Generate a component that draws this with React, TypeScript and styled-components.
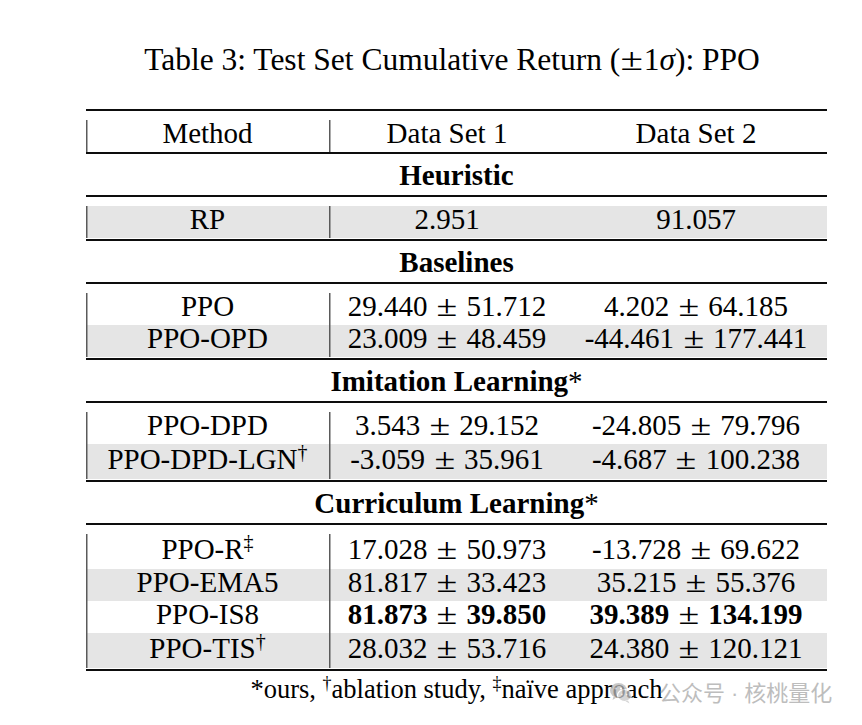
import React from "react";
import styled, { createGlobalStyle } from "styled-components";

const GlobalStyle = createGlobalStyle`
  html, body { margin: 0; padding: 0; background: #ffffff; }
  body {
    font-family: "Liberation Serif", "Times New Roman", serif;
    color: #000;
  }
`;

const Page = styled.div`
  position: relative;
  width: 862px;
  height: 725px;
  overflow: hidden;
  box-sizing: border-box;
  padding: 40px 0 0 86px;
  background: #fff;
`;

const Figure = styled.div`
  width: 741px;
  display: flex;
  flex-direction: column;
`;

const Caption = styled.div`
  height: 40px;
  line-height: 40px;
  font-size: 31.5px;
  text-align: center;
  padding-right: 9px;
  margin-bottom: 29px;
  white-space: nowrap;
`;

const CapPm = styled.span`
  display: inline-block;
  transform: scaleX(1.3);
  margin: 0 3px;
`;

const Rule = styled.div`
  height: 2px;
  background: #0d0d0d;
`;

const Gap = styled.div<{ $h: number }>`
  height: ${(p) => p.$h}px;
`;

const Row = styled.div<{ $shade?: boolean; $tall?: boolean }>`
  display: grid;
  grid-template-columns: 243px 236px 262px;
  height: ${(p) => (p.$tall ? 35 : 32)}px;
  background: ${(p) => (p.$shade ? "#e5e5e5" : "transparent")};
  box-shadow: inset 1.5px 0 0 #5a5a5a;
`;

const Cell = styled.div<{ $divider?: boolean; $tall?: boolean }>`
  font-size: 29px;
  line-height: 26px;
  text-align: center;
  white-space: nowrap;
  padding-top: ${(p) => (p.$tall ? 2 : 0)}px;
  box-shadow: ${(p) => (p.$divider ? "inset 1.5px 0 0 #5a5a5a" : "none")};
`;

const SectionTitle = styled.div`
  height: 41px;
  box-sizing: border-box;
  padding-top: 2px;
  line-height: 39px;
  font-size: 29px;
  font-weight: bold;
  text-align: center;
  white-space: nowrap;
`;

const Star = styled.span`
  font-weight: normal;
`;

const Sup = styled.span`
  font-size: 20px;
  line-height: 0;
  vertical-align: 10px;
`;

const Pm = styled.span`
  display: inline-block;
  transform: scaleX(1.3);
  margin: 0 11.5px;
  font-weight: normal;
`;

const Strong = styled.span`
  font-weight: bold;
`;

const Ital = styled.span`
  font-style: italic;
`;

const Footnote = styled.div`
  padding-top: 4px;
  font-size: 26.5px;
  line-height: 28px;
  text-align: center;
  white-space: nowrap;
`;

const FootSup = styled.span`
  font-size: 18px;
  line-height: 0;
  vertical-align: 9px;
`;

const Watermark = styled.div`
  position: absolute;
  left: 609px;
  top: 677px;
  display: flex;
  align-items: center;
  gap: 26px;
  opacity: 0.75;
  pointer-events: none;
`;

const WatermarkText = styled.span`
  font-family: "Noto Sans CJK SC", "Noto Sans", sans-serif;
  font-size: 22px;
  line-height: 28px;
  color: #a8a8a8;
  white-space: nowrap;
`;

const WatermarkDot = styled.span`
  font-family: "Liberation Sans", sans-serif;
  margin: 0 6px;
`;

type Val = { text: string; bold?: boolean };
type DataRow = { method: string; sup?: string; a: Val; b: Val; shade?: boolean };
type Group = { title: string; star?: boolean; rows: DataRow[] };

const groups: Group[] = [
  {
    title: "Heuristic",
    rows: [{ method: "RP", a: { text: "2.951" }, b: { text: "91.057" }, shade: true }],
  },
  {
    title: "Baselines",
    rows: [
      { method: "PPO", a: { text: "29.440 ± 51.712" }, b: { text: "4.202 ± 64.185" } },
      { method: "PPO-OPD", a: { text: "23.009 ± 48.459" }, b: { text: "-44.461 ± 177.441" }, shade: true },
    ],
  },
  {
    title: "Imitation Learning",
    star: true,
    rows: [
      { method: "PPO-DPD", a: { text: "3.543 ± 29.152" }, b: { text: "-24.805 ± 79.796" } },
      { method: "PPO-DPD-LGN", sup: "†", a: { text: "-3.059 ± 35.961" }, b: { text: "-4.687 ± 100.238" }, shade: true },
    ],
  },
  {
    title: "Curriculum Learning",
    star: true,
    rows: [
      { method: "PPO-R", sup: "‡", a: { text: "17.028 ± 50.973" }, b: { text: "-13.728 ± 69.622" } },
      { method: "PPO-EMA5", a: { text: "81.817 ± 33.423" }, b: { text: "35.215 ± 55.376" }, shade: true },
      { method: "PPO-IS8", a: { text: "81.873 ± 39.850", bold: true }, b: { text: "39.389 ± 134.199", bold: true } },
      { method: "PPO-TIS", sup: "†", a: { text: "28.032 ± 53.716" }, b: { text: "24.380 ± 120.121" }, shade: true },
    ],
  },
];

function Value({ v }: { v: Val }) {
  const parts = v.text.split(" ± ");
  const Wrap = v.bold ? Strong : React.Fragment;
  if (parts.length === 1) return <Wrap>{parts[0]}</Wrap>;
  return (
    <>
      <Wrap>{parts[0]}</Wrap>
      <Pm>±</Pm>
      <Wrap>{parts[1]}</Wrap>
    </>
  );
}

function WeChatIcon() {
  return (
    <svg width="24" height="24" viewBox="0 0 24 24" aria-hidden="true">
      <ellipse cx="9.5" cy="9.5" rx="8.5" ry="7.5" fill="#b8b8b8" />
      <path d="M4.5 15.5 L3.5 19 L7.5 16.5 Z" fill="#b8b8b8" />
      <ellipse cx="15.5" cy="14.5" rx="7" ry="6" fill="#c8c8c8" stroke="#fff" strokeWidth="1.2" />
      <path d="M19 19.5 L20.5 22.5 L16.5 20.3 Z" fill="#c8c8c8" />
      <circle cx="6.5" cy="7.5" r="1.1" fill="#fff" />
      <circle cx="12" cy="7.5" r="1.1" fill="#fff" />
      <circle cx="13.2" cy="13.5" r="0.9" fill="#fff" />
      <circle cx="17.8" cy="13.5" r="0.9" fill="#fff" />
    </svg>
  );
}

export default function App() {
  return (
    <Page>
      <GlobalStyle />
      <Figure>
        <Caption>
          Table 3: Test Set Cumulative Return (<CapPm>±</CapPm>1<Ital>σ</Ital>): PPO
        </Caption>
        <Rule />
        <Gap $h={9} />
        <Row>
          <Cell>Method</Cell>
          <Cell $divider>Data Set 1</Cell>
          <Cell>Data Set 2</Cell>
        </Row>
        <Rule />
        {groups.map((g) => (
          <React.Fragment key={g.title}>
            <SectionTitle>
              {g.title}
              {g.star && <Star>*</Star>}
            </SectionTitle>
            <Rule />
            <Gap $h={9} />
            {g.rows.map((r) => (
              <Row key={r.method} $shade={r.shade} $tall={!!r.sup}>
                <Cell $tall={!!r.sup}>
                  {r.method}
                  {r.sup && <Sup>{r.sup}</Sup>}
                </Cell>
                <Cell $divider $tall={!!r.sup}>
                  <Value v={r.a} />
                </Cell>
                <Cell $tall={!!r.sup}>
                  <Value v={r.b} />
                </Cell>
              </Row>
            ))}
            <Gap $h={1} />
            <Rule />
          </React.Fragment>
        ))}
        <Footnote>
          *ours, <FootSup>†</FootSup>ablation study, <FootSup>‡</FootSup>naïve approach
        </Footnote>
      </Figure>
      <Watermark>
        <WeChatIcon />
        <WatermarkText>
          公众号<WatermarkDot>·</WatermarkDot>核桃量化
        </WatermarkText>
      </Watermark>
    </Page>
  );
}
